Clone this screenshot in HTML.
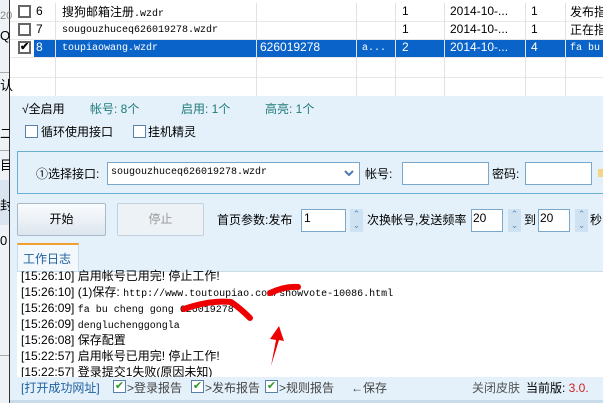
<!DOCTYPE html><html><head><meta charset="utf-8"><style>
*{margin:0;padding:0;box-sizing:border-box}
body{width:603px;height:403px;overflow:hidden;background:#fff;position:relative;font-family:"Liberation Sans","Noto Sans CJK SC",sans-serif;font-size:12px;color:#000}
.a{position:absolute;white-space:nowrap}
.m{font-family:"Liberation Mono","Noto Sans CJK SC",monospace;font-size:10px}
.vl{position:absolute;width:1px;background:#e2e2e2;top:3px;height:93px}
.hl{position:absolute;height:1px;background:#e8e8e8;left:10px;width:593px}
.cb{position:absolute;width:13px;height:13px;border:2px solid #666;background:#fff}
.cb2{position:absolute;width:13px;height:13px;border:1px solid #5a7fa8;background:#fff}
.ck{position:absolute;width:13px;height:13px;border:1px solid #5a7fa8;background:#fff;color:#2a9a2a;font-size:11px;line-height:11px;text-align:center}
.inp{position:absolute;background:#fff;border:1px solid #7aa8cc;height:23px}
.spin{position:absolute;width:13px;height:23px;background:#cfe2f2;color:#5a8ab8;font-size:9px;line-height:11px;text-align:center}
.lg{position:absolute;left:21px;height:16px;line-height:16px;white-space:nowrap}
</style></head><body>
<div class="a" style="left:0;top:0;width:9px;height:403px;background:#eef2f6"></div>
<div class="a" style="left:9px;top:0;width:1px;height:403px;background:#333"></div>
<div class="a" style="left:0;top:72px;width:9px;height:1px;background:#aaa"></div>
<div class="a" style="left:0;top:150px;width:9px;height:1px;background:#aaa"></div>
<div class="a" style="left:0;top:180px;width:9px;height:45px;background:#d9e4f0"></div>
<div class="a" style="left:0;top:355px;width:9px;height:1px;background:#aaa"></div>
<div class="a" style="left:0;top:10px;font-size:11px;color:#888">20</div>
<div class="a" style="left:0;top:28px;font-size:13px">Q</div>
<div class="a" style="left:0;top:75px;font-size:13px">认</div>
<div class="a" style="left:0;top:123px;font-size:13px">二</div>
<div class="a" style="left:0;top:155px;font-size:13px">目</div>
<div class="a" style="left:0;top:195px;font-size:13px">封</div>
<div class="a" style="left:0;top:233px;font-size:13px">0</div>
<div class="a" style="left:34px;top:39px;width:569px;height:18px;background:#0a63c8"></div>
<div class="hl" style="top:21px"></div><div class="hl" style="top:39px"></div><div class="hl" style="top:57px"></div><div class="hl" style="top:77px"></div>
<div class="vl" style="left:55px"></div><div class="vl" style="left:256px"></div><div class="vl" style="left:356px"></div><div class="vl" style="left:395px"></div><div class="vl" style="left:444px"></div><div class="vl" style="left:525px"></div><div class="vl" style="left:565px"></div>
<div class="cb" style="left:18px;top:5px"></div><div class="cb" style="left:18px;top:23px"></div>
<div class="cb" style="left:18px;top:41px;font-size:11px;line-height:9px;font-weight:bold">✔</div>
<div class="a" style="left:36px;top:4px">6</div><div class="a" style="left:36px;top:22px">7</div><div class="a" style="left:36px;top:40px;color:#fff">8</div>
<div class="a" style="left:62px;top:3px">搜狗邮箱注册<span class="m">.wzdr</span></div>
<div class="a m" style="left:62px;top:25px">sougouzhuceq626019278.wzdr</div>
<div class="a m" style="left:62px;top:43px;color:#fff">toupiaowang.wzdr</div>
<div class="a" style="left:260px;top:40px;color:#fff">626019278</div>
<div class="a m" style="left:362px;top:43px;color:#fff">a...</div>
<div class="a" style="left:402px;top:4px">1</div><div class="a" style="left:402px;top:22px">1</div><div class="a" style="left:402px;top:40px;color:#fff">2</div>
<div class="a" style="left:450px;top:4px">2014-10-...</div><div class="a" style="left:450px;top:22px">2014-10-...</div><div class="a" style="left:450px;top:40px;color:#fff">2014-10-...</div>
<div class="a" style="left:531px;top:4px">1</div><div class="a" style="left:531px;top:22px">1</div><div class="a" style="left:531px;top:40px;color:#fff">4</div>
<div class="a" style="left:570px;top:3px">发布指</div><div class="a" style="left:570px;top:21px">正在指</div><div class="a m" style="left:570px;top:43px;color:#fff">fa bu</div>
<div class="a" style="left:10px;top:96px;width:593px;height:307px;background:#e4f1fa"></div>
<div class="a" style="left:22px;top:100px">√全启用</div>
<div class="a" style="left:90px;top:100px;color:#1f7a7a">帐号: 8个</div>
<div class="a" style="left:181px;top:100px;color:#1f7a7a">启用: 1个</div>
<div class="a" style="left:265px;top:100px;color:#1f7a7a">高亮: 1个</div>
<div class="cb2" style="left:25px;top:125px"></div><div class="a" style="left:41px;top:123px">循环使用接口</div>
<div class="cb2" style="left:133px;top:125px"></div><div class="a" style="left:148px;top:123px">挂机精灵</div>
<div class="a" style="left:17px;top:151px;width:590px;height:43px;border:1px solid #6ab0d0"></div>
<div class="a" style="left:36px;top:165px">①选择接口:</div>
<div class="inp" style="left:107px;top:162px;width:253px"></div>
<div class="a m" style="left:111px;top:167px">sougouzhuceq626019278.wzdr</div>
<svg class="a" style="left:344px;top:169px" width="10" height="8"><path d="M1 2 L5 6 L9 2" stroke="#4a7ab0" stroke-width="2" fill="none"/></svg>
<div class="a" style="left:365px;top:165px">帐号:</div>
<div class="inp" style="left:402px;top:162px;width:87px"></div>
<div class="a" style="left:492px;top:165px">密码:</div>
<div class="inp" style="left:525px;top:162px;width:67px"></div>
<div class="a" style="left:598px;top:169px;width:5px;height:8px;background:#f5d48a"></div>
<div class="a" style="left:17px;top:203px;width:89px;height:33px;border:1px solid #a8b8c8;border-radius:2px;background:linear-gradient(#fafcfe,#dde6ee);text-align:center;line-height:31px">开始</div>
<div class="a" style="left:117px;top:203px;width:87px;height:33px;border:1px solid #c4d0dc;border-radius:2px;background:#edf2f6;text-align:center;line-height:31px;color:#999">停止</div>
<div class="a" style="left:217px;top:211px">首页参数:发布</div>
<div class="inp" style="left:301px;top:209px;width:45px"></div><div class="a" style="left:304px;top:211px">1</div>
<div class="spin" style="left:350px;top:209px">⌃<br>⌄</div>
<div class="a" style="left:367px;top:211px">次换帐号,发送频率</div>
<div class="inp" style="left:471px;top:209px;width:32px"></div><div class="a" style="left:473px;top:211px">20</div>
<div class="spin" style="left:508px;top:209px">⌃<br>⌄</div>
<div class="a" style="left:524px;top:211px">到</div>
<div class="inp" style="left:538px;top:209px;width:32px"></div><div class="a" style="left:540px;top:211px">20</div>
<div class="spin" style="left:575px;top:209px">⌃<br>⌄</div>
<div class="a" style="left:590px;top:211px">秒,</div>
<div class="a" style="left:17px;top:243px;width:62px;height:29px;background:#f2f8fc;border-top:2px solid #f0a030;border-left:1px solid #c8dcea;border-right:1px solid #c8dcea"></div>
<div class="a" style="left:23px;top:250px;color:#1f5fa0">工作日志</div>
<div class="a" style="left:17px;top:271px;width:586px;height:1px;background:#c8dcea"></div>
<div class="a" style="left:17px;top:272px;width:586px;height:105px;background:#fff"></div>
<div class="lg" style="top:268px">[15:26:10] 启用帐号已用完! 停止工作!</div>
<div class="lg" style="top:284px">[15:26:10] (1)保存: <span class="m">http://www.toutoupiao.com/showvote-10086.html</span></div>
<div class="lg" style="top:300px">[15:26:09] <span class="m">fa bu cheng gong 626019278</span></div>
<div class="lg" style="top:316px">[15:26:09] <span class="m">dengluchenggongla</span></div>
<div class="lg" style="top:332px">[15:26:08] 保存配置</div>
<div class="lg" style="top:348px">[15:22:57] 启用帐号已用完! 停止工作!</div>
<div class="lg" style="top:364px">[15:22:57] 登录提交1失败(原因未知)</div>
<svg class="a" style="left:0;top:0" width="603" height="403"><path d="M184 309 Q210 300 231 302 Q240 308 250 318" stroke="#e00" stroke-width="6" fill="none" stroke-linecap="round"/><path d="M270 293 Q285 286 298 287" stroke="#e00" stroke-width="6" fill="none" stroke-linecap="round"/><path d="M271 366 L276 340 L270 339 L279 326 L284 341 L279 340 Z" fill="#e00"/></svg>
<div class="a" style="left:10px;top:377px;width:593px;height:23px;background:#e4f1fa"></div>
<div class="a" style="left:21px;top:379px;color:#1f5fa0">[打开成功网址]</div>
<div class="ck" style="left:113px;top:380px">✔</div><div class="a" style="left:127px;top:379px;color:#444">&gt;登录报告</div>
<div class="ck" style="left:191px;top:380px">✔</div><div class="a" style="left:205px;top:379px;color:#444">&gt;发布报告</div>
<div class="ck" style="left:265px;top:380px">✔</div><div class="a" style="left:279px;top:379px;color:#444">&gt;规则报告</div>
<div class="a" style="left:351px;top:379px;color:#444">←保存</div>
<div class="a" style="left:472px;top:379px;color:#555">关闭皮肤</div>
<div class="a" style="left:526px;top:379px">当前版: <span style="color:#d02020">3.0.</span></div>
<div class="a" style="left:10px;top:400px;width:593px;height:3px;background:#c8dcea"></div>
</body></html>
